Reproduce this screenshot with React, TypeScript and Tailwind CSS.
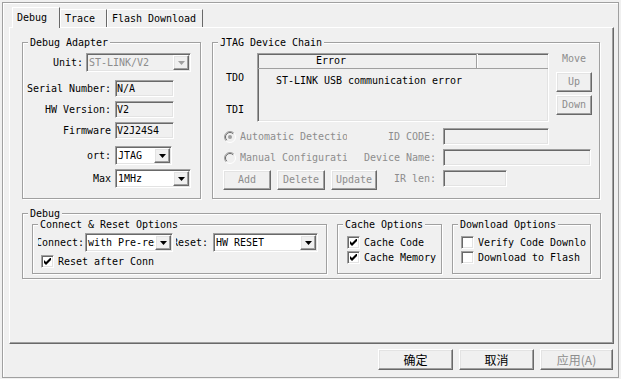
import React from "react";

const font =
  "[font-family:'DejaVu_Sans_Mono','Liberation_Mono',monospace] text-[10px] leading-[12px] tracking-[-0.02px]";
const cjk = "[font-family:'Noto_Sans_CJK_SC','Noto_Sans',sans-serif] text-[12px] leading-[14px] tracking-normal";
const sunken =
  "border border-t-[#a0a0a0] border-l-[#a0a0a0] border-r-white border-b-white shadow-[inset_1px_1px_0_#696969,inset_-1px_-1px_0_#e3e3e3]";
const raised =
  "border border-t-white border-l-white border-r-[#696969] border-b-[#696969] shadow-[inset_-1px_-1px_0_#a0a0a0,inset_1px_1px_0_#e3e3e3]";
const dim = "text-[#8d8d8d]";

function cx(...parts: (string | false | undefined)[]) {
  return parts.filter(Boolean).join(" ");
}

function Group({
  label,
  className,
  children,
}: {
  label: string;
  className?: string;
  children?: React.ReactNode;
}) {
  return (
    <div
      className={cx(
        "relative shrink-0 border border-[#a0a0a0] shadow-[inset_1px_1px_0_#fff,1px_1px_0_#fff]",
        className
      )}
    >
      <span className="absolute left-[5px] top-[-6px] whitespace-nowrap bg-[#f0f0f0] px-[2px] leading-[11px]">
        {label}
      </span>
      {children}
    </div>
  );
}

function Field({ value, className }: { value?: string; className?: string }) {
  return (
    <div
      className={cx(
        "flex h-[17px] shrink-0 items-center overflow-hidden whitespace-nowrap bg-[#f0f0f0] pl-[1px]",
        sunken,
        className
      )}
    >
      {value}
    </div>
  );
}

function Combo({
  value,
  className,
  disabled,
}: {
  value: string;
  className?: string;
  disabled?: boolean;
}) {
  return (
    <div
      className={cx(
        "flex h-[19px] shrink-0",
        sunken,
        disabled ? "bg-[#f0f0f0]" : "bg-white",
        className
      )}
    >
      <span
        className={cx(
          "flex-1 overflow-hidden whitespace-nowrap pl-[2px] leading-[17px]",
          disabled && dim
        )}
      >
        {value}
      </span>
      <span
        className={cx(
          "my-[1px] mr-[1px] flex w-[16px] items-center justify-center bg-[#f0f0f0]",
          raised
        )}
      >
        <svg width="7" height="4" viewBox="0 0 7 4">
          <path d="M0 0H7L3.5 4Z" fill={disabled ? "#a0a0a0" : "#000"} />
        </svg>
      </span>
    </div>
  );
}

function Check({
  checked,
  label,
  className,
  labelClass,
}: {
  checked?: boolean;
  label: string;
  className?: string;
  labelClass?: string;
}) {
  return (
    <div className={cx("flex h-[13px] items-center", className)}>
      <span
        className={cx(
          "flex h-[13px] w-[13px] shrink-0 items-center justify-center bg-white",
          sunken
        )}
      >
        {checked && (
          <svg width="7" height="7" viewBox="0 0 7 7">
            <path d="M0 2L2 4L7 -1V2L2 7L0 5Z" fill="#000" />
          </svg>
        )}
      </span>
      <span className={cx("ml-[4px] overflow-hidden whitespace-nowrap", labelClass)}>
        {label}
      </span>
    </div>
  );
}

function Radio({ checked }: { checked?: boolean }) {
  return (
    <svg width="12" height="12" viewBox="0 0 12 12" className="shrink-0">
      <circle cx="6" cy="6" r="5.5" fill="#f0f0f0" />
      <path d="M2.1 9.9A5.5 5.5 0 0 1 9.9 2.1" fill="none" stroke="#a0a0a0" />
      <path d="M2.8 9.2A4.5 4.5 0 0 1 9.2 2.8" fill="none" stroke="#696969" />
      <path d="M9.9 2.1A5.5 5.5 0 0 1 2.1 9.9" fill="none" stroke="#fff" />
      {checked && <circle cx="6" cy="6" r="2" fill="#a0a0a0" />}
    </svg>
  );
}

function Btn({
  children,
  className,
  disabled,
}: {
  children: React.ReactNode;
  className?: string;
  disabled?: boolean;
}) {
  return (
    <button
      type="button"
      className={cx(
        "flex h-[20px] shrink-0 items-center justify-center bg-[#f0f0f0]",
        raised,
        disabled && dim,
        className
      )}
    >
      {children}
    </button>
  );
}

function Row({ label, children, className }: { label: string; children: React.ReactNode; className?: string }) {
  return (
    <div className={cx("flex items-center", className)}>
      <span className="w-[88px] shrink-0 text-right">{label}</span>
      <div className="ml-[4px] flex">{children}</div>
    </div>
  );
}

export default function App() {
  return (
    <div className={cx("h-[379px] w-[621px] overflow-hidden bg-[#f0f0f0] pl-[2px] pt-[2px] text-black", font)}>
      <div className="flex h-[376px] w-[617px] flex-col border border-[#a0a0a0] pl-[6px] pt-[4px] shadow-[inset_1px_1px_0_#fff]">
        {/* tabs */}
        <div className="flex h-[20px] items-end pl-[3px]">
          <div className="relative z-10 -mb-px h-[21px] w-[48px] border-l border-r border-t border-l-white border-r-[#696969] border-t-white bg-[#f0f0f0] pl-[4px] pt-[4px]">
            Debug
          </div>
          <div className="h-[18px] w-[47px] border-l border-r border-t border-l-white border-r-[#696969] border-t-white pl-[4px] pt-[3px]">
            Trace
          </div>
          <div className="h-[18px] w-[96px] border-l border-r border-t border-l-white border-r-[#696969] border-t-white pl-[4px] pt-[3px]">
            Flash Download
          </div>
        </div>

        {/* panel */}
        <div className="flex h-[317px] w-[605px] flex-col border border-b-[#696969] border-l-white border-r-[#696969] border-t-white bg-[#f0f0f0] shadow-[inset_-1px_-1px_0_#a0a0a0]">
          <div className="ml-[12px] mt-[14px] flex gap-[11px]">
            <Group label="Debug Adapter" className="h-[157px] w-[179px]">
              <div className="flex flex-col">
                <div className="mt-[10px] flex h-[19px] items-center">
                  <span className="w-[60px] text-right">Unit:</span>
                  <Combo value="ST-LINK/V2" disabled className="ml-[3px] w-[105px]" />
                </div>
                <Row label="Serial Number:" className="mt-[8px]">
                  <Field value="N/A" className="w-[59px]" />
                </Row>
                <Row label="HW Version:" className="mt-[4px]">
                  <Field value="V2" className="w-[59px]" />
                </Row>
                <Row label="Firmware" className="mt-[4px]">
                  <Field value="V2J24S4" className="w-[59px]" />
                </Row>
                <Row label="ort:" className="mt-[7px]">
                  <Combo value="JTAG" className="w-[57px]" />
                </Row>
                <Row label="Max" className="mt-[4px]">
                  <Combo value="1MHz" className="w-[76px]" />
                </Row>
              </div>
            </Group>

            <Group label="JTAG Device Chain" className="h-[157px] w-[388px]">
              <div className="flex flex-col">
                <div className="mt-[10px] flex h-[69px]">
                  <div className="flex w-[44px] flex-col pl-[13px] pt-[19px]">
                    <span>TDO</span>
                    <span className="mt-[20px]">TDI</span>
                  </div>
                  <div className={cx("flex h-[69px] w-[292px] flex-col bg-[#f0f0f0]", sunken)}>
                    <div className="flex h-[15px] border-b border-[#a0a0a0]">
                      <div className="w-[219px] border-r border-[#a0a0a0] pl-[58px] leading-[14px]">
                        Error
                      </div>
                      <div className="flex-1 shadow-[inset_1px_0_0_#fff]" />
                    </div>
                    <div className="whitespace-nowrap pl-[18px] pt-[6px]">
                      ST-LINK USB communication error
                    </div>
                  </div>
                  <div className="ml-[7px] flex w-[36px] flex-col items-center">
                    <span className={dim}>Move</span>
                    <Btn disabled className="mt-[7px] w-[36px]">
                      Up
                    </Btn>
                    <Btn disabled className="mt-[3px] w-[36px]">
                      Down
                    </Btn>
                  </div>
                </div>

                <div className="mt-[6px] flex h-[17px] items-center">
                  <div className="flex w-[150px] items-center pl-[11px]">
                    <Radio checked />
                    <span className={cx("ml-[4px] w-[107px] overflow-hidden whitespace-nowrap", dim)}>
                      Automatic Detection
                    </span>
                  </div>
                  <span className={cx("w-[73px] text-right", dim)}>ID CODE:</span>
                  <Field className="ml-[7px] w-[106px]" />
                </div>

                <div className="mt-[4px] flex h-[17px] items-center">
                  <div className="flex w-[150px] items-center pl-[11px]">
                    <Radio />
                    <span className={cx("ml-[4px] w-[107px] overflow-hidden whitespace-nowrap", dim)}>
                      Manual Configuration
                    </span>
                  </div>
                  <span className={cx("w-[73px] text-right", dim)}>Device Name:</span>
                  <Field className="ml-[7px] w-[148px]" />
                </div>

                <div className="mt-[4px] flex h-[20px] items-start">
                  <div className="flex pl-[10px]">
                    <Btn disabled className="w-[48px]">
                      Add
                    </Btn>
                    <Btn disabled className="ml-[6px] w-[48px]">
                      Delete
                    </Btn>
                    <Btn disabled className="ml-[6px] w-[46px]">
                      Update
                    </Btn>
                  </div>
                  <span className={cx("w-[59px] text-right leading-[17px]", dim)}>IR len:</span>
                  <Field className="ml-[7px] w-[64px]" />
                </div>
              </div>
            </Group>
          </div>

          <Group label="Debug" className="ml-[12px] mt-[14px] h-[66px] w-[579px]">
            <div className="ml-[9px] mt-[10px] flex">
              <Group label="Connect & Reset Options" className="h-[50px] w-[295px]">
                <div className="mt-[8px] flex h-[19px] items-center">
                  <div className="ml-[5px] flex w-[46px] justify-end overflow-hidden whitespace-nowrap">
                    <span className="shrink-0">Connect:</span>
                  </div>
                  <Combo value="with Pre-reset" className="ml-[1px] w-[88px]" />
                  <div className="ml-[3px] flex w-[32px] justify-end overflow-hidden whitespace-nowrap">
                    <span className="shrink-0">Reset:</span>
                  </div>
                  <Combo value="HW RESET" className="ml-[5px] w-[105px]" />
                </div>
                <Check
                  checked
                  label="Reset after Connect"
                  className="ml-[8px] mt-[3px]"
                  labelClass="w-[96px]"
                />
              </Group>

              <Group label="Cache Options" className="ml-[10px] h-[50px] w-[105px]">
                <Check checked label="Cache Code" className="ml-[9px] mt-[11px]" />
                <Check checked label="Cache Memory" className="ml-[9px] mt-[2px]" />
              </Group>

              <Group label="Download Options" className="ml-[10px] h-[50px] w-[139px]">
                <Check
                  label="Verify Code Download"
                  className="ml-[8px] mt-[11px]"
                  labelClass="w-[108px]"
                />
                <Check label="Download to Flash" className="ml-[8px] mt-[2px]" />
              </Group>
            </div>
          </Group>
        </div>

        {/* dialog buttons */}
        <div className={cx("mt-[5px] flex justify-end gap-[6px] pr-[5px]", cjk)}>
          <Btn className="h-[21px] w-[75px]">确定</Btn>
          <Btn className="h-[21px] w-[75px]">取消</Btn>
          <Btn disabled className="h-[21px] w-[73px]">
            应用(A)
          </Btn>
        </div>
      </div>
    </div>
  );
}
